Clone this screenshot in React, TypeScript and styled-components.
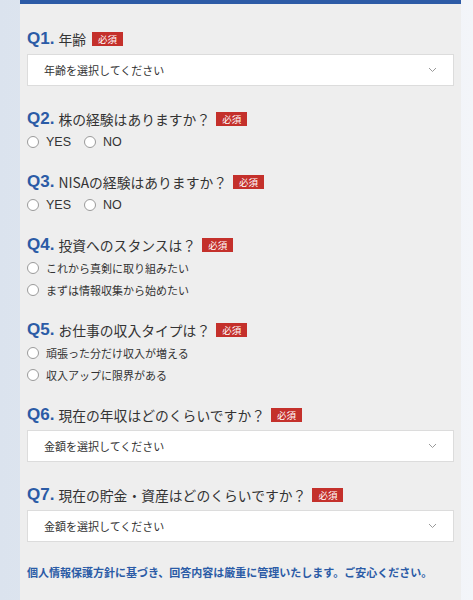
import React from 'react';
import styled, { createGlobalStyle } from 'styled-components';

const GlobalStyle = createGlobalStyle`
    html, body {
        margin: 0;
        padding: 0;
    }
    body {
        background: linear-gradient(90deg, #dbe3ee 0%, #e4eaf2 50%, #f3f5f9 100%);
        font-family: "Noto Sans CJK JP", "Liberation Sans", sans-serif;
        color: #333;
    }
`;

const Page = styled.div`
    padding-left: 20px;
    min-height: 600px;
`;

const Panel = styled.div`
    width: 441px;
    box-sizing: border-box;
    background: #eeeeee;
    border-top: 4px solid #2d5ba6;
    padding: 24px 7px 40px;
    min-height: 600px;
`;

const Section = styled.div<{ $gap: number }>`
    display: flex;
    flex-direction: column;
    margin-bottom: ${(p) => p.$gap}px;
`;

const Heading = styled.div`
    display: flex;
    align-items: center;
    height: 22px;
    font-size: 13.8px;
    color: #333;
`;

const QNum = styled.span`
    font-family: "Liberation Sans", Arial, sans-serif;
    font-weight: bold;
    font-size: 17px;
    color: #2b5ba6;
    margin-right: 4px;
`;

const Badge = styled.span`
    display: inline-flex;
    align-items: center;
    justify-content: center;
    height: 14px;
    padding: 0 6px;
    margin-left: 6px;
    background: #c4302b;
    color: #fff;
    font-size: 9.5px;
`;

const Select = styled.div`
    margin-top: 4px;
    margin-bottom: 4px;
    height: 32px;
    box-sizing: border-box;
    background: #fff;
    border: 1px solid #dcdcdc;
    display: flex;
    align-items: center;
    justify-content: space-between;
    padding: 0 16px;
    font-size: 11px;
    color: #333;
`;

const Options = styled.div<{ $inline?: boolean }>`
    margin-top: 1px;
    display: flex;
    flex-direction: ${(p) => (p.$inline ? 'row' : 'column')};
    gap: ${(p) => (p.$inline ? '13px' : '0')};
`;

const Option = styled.label`
    display: flex;
    align-items: center;
    height: 22px;
    gap: 7px;
    font-size: 11px;
    color: #333;
`;

const OptionEn = styled.span`
    font-family: "Liberation Sans", Arial, sans-serif;
    font-size: 12.5px;
`;

const Radio = styled.span`
    width: 12px;
    height: 12px;
    box-sizing: border-box;
    border-radius: 50%;
    border: 1px solid #9a9a9a;
    background: #fff;
`;

const Note = styled.p`
    margin: 17px 0 0;
    line-height: 18px;
    font-size: 11px;
    font-weight: bold;
    color: #2b5ba6;
`;

const Chevron = () => (
    <svg width="9" height="6" viewBox="0 0 9 6">
        <polyline points="1,1 4.5,4.5 8,1" fill="none" stroke="#999" strokeWidth="1" />
    </svg>
);

type QuestionProps = {
    num: number;
    title: string;
    gap: number;
    children: JSX.Element | JSX.Element[];
};

const Question = (props: QuestionProps) => (
    <Section $gap={props.gap}>
        <Heading>
            <QNum>Q{props.num}.</QNum>
            {props.title}
            <Badge>必須</Badge>
        </Heading>
        {props.children}
    </Section>
);

const SelectBox = ({ label }: { label: string }) => (
    <Select>
        {label}
        <Chevron />
    </Select>
);

const YesNo = () => (
    <Options $inline>
        <Option><Radio /><OptionEn>YES</OptionEn></Option>
        <Option><Radio /><OptionEn>NO</OptionEn></Option>
    </Options>
);

const Choices = ({ items }: { items: string[] }) => (
    <Options>
        {items.map((item) => (
            <Option key={item}><Radio />{item}</Option>
        ))}
    </Options>
);

export default function App() {
    return (
        <Page>
            <GlobalStyle />
            <Panel>
                <Question num={1} title="年齢" gap={18}>
                    <SelectBox label="年齢を選択してください" />
                </Question>
                <Question num={2} title="株の経験はありますか？" gap={18}>
                    <YesNo />
                </Question>
                <Question num={3} title="NISAの経験はありますか？" gap={18}>
                    <YesNo />
                </Question>
                <Question num={4} title="投資へのスタンスは？" gap={18}>
                    <Choices items={['これから真剣に取り組みたい', 'まずは情報収集から始めたい']} />
                </Question>
                <Question num={5} title="お仕事の収入タイプは？" gap={18}>
                    <Choices items={['頑張った分だけ収入が増える', '収入アップに限界がある']} />
                </Question>
                <Question num={6} title="現在の年収はどのくらいですか？" gap={18}>
                    <SelectBox label="金額を選択してください" />
                </Question>
                <Question num={7} title="現在の貯金・資産はどのくらいですか？" gap={0}>
                    <SelectBox label="金額を選択してください" />
                </Question>
                <Note>個人情報保護方針に基づき、回答内容は厳重に管理いたします。ご安心ください。</Note>
            </Panel>
        </Page>
    );
}
